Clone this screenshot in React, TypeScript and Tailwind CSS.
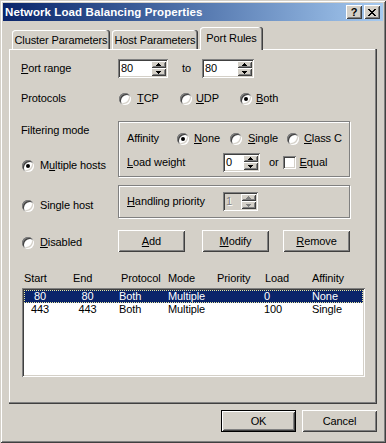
import React from "react";

const raised =
  "shadow-[inset_1px_1px_#ffffff,inset_-1px_-1px_#404040,inset_2px_2px_#d4d0c8,inset_-2px_-2px_#808080]";
const sunken =
  "shadow-[inset_1px_1px_#808080,inset_-1px_-1px_#ffffff,inset_2px_2px_#404040,inset_-2px_-2px_#d4d0c8]";
const etched = "border border-[#808080] shadow-[inset_1px_1px_#ffffff,1px_1px_#ffffff]";

function Arrow({ up, disabled }: { up: boolean; disabled?: boolean }) {
  const c = disabled ? "#808080" : "#000000";
  return (
    <svg width="5" height="3" viewBox="0 0 5 3" shapeRendering="crispEdges">
      {up ? (
        <>
          <rect x="2" y="0" width="1" height="1" fill={c} />
          <rect x="1" y="1" width="3" height="1" fill={c} />
          <rect x="0" y="2" width="5" height="1" fill={c} />
        </>
      ) : (
        <>
          <rect x="0" y="0" width="5" height="1" fill={c} />
          <rect x="1" y="1" width="3" height="1" fill={c} />
          <rect x="2" y="2" width="1" height="1" fill={c} />
        </>
      )}
    </svg>
  );
}

function Spinner({ className, value, disabled }: { className: string; value: string; disabled?: boolean }) {
  return (
    <div className={`flex h-[19px] p-[2px] ${sunken} ${disabled ? "bg-[#d4d0c8]" : "bg-white"} ${className}`}>
      <div
        className={`flex-1 pl-[1px] leading-[15px] ${
          disabled ? "text-[#808080] [text-shadow:1px_1px_0_#ffffff]" : "text-black"
        }`}
      >
        {value}
      </div>
      <div className="flex w-[15px] flex-col bg-[#d4d0c8]">
        <div className={`flex h-[7px] items-center justify-center ${raised}`}>
          <Arrow up disabled={disabled} />
        </div>
        <div className={`flex h-[8px] items-center justify-center ${raised}`}>
          <Arrow up={false} disabled={disabled} />
        </div>
      </div>
    </div>
  );
}

function Radio({ checked }: { checked?: boolean }) {
  return (
    <div
      className={`flex h-[12px] w-[12px] shrink-0 items-center justify-center rounded-full bg-white shadow-[inset_1px_1px_#808080,inset_-1px_-1px_#ffffff,inset_2px_2px_#404040,inset_-2px_-2px_#d4d0c8]`}
    >
      {checked && <div className="h-[4px] w-[4px] rounded-full bg-black" />}
    </div>
  );
}

function RadioItem({
  checked,
  children,
  className = "",
  gap = "gap-[6px]",
}: {
  checked?: boolean;
  children: React.ReactNode;
  className?: string;
  gap?: string;
}) {
  return (
    <div className={`flex h-[13px] items-center ${gap} ${className}`}>
      <Radio checked={checked} />
      <span className="leading-[13px] whitespace-nowrap">{children}</span>
    </div>
  );
}

function Button({ children, className = "", isDefault }: { children: React.ReactNode; className?: string; isDefault?: boolean }) {
  if (isDefault) {
    return (
      <div className={`h-[22px] border border-black bg-[#d4d0c8] ${className}`}>
        <div className={`flex h-full w-full items-center justify-center ${raised}`}>{children}</div>
      </div>
    );
  }
  return (
    <div className={`flex h-[22px] items-center justify-center bg-[#d4d0c8] ${raised} ${className}`}>{children}</div>
  );
}

const U = ({ children }: { children: React.ReactNode }) => <u className="underline-offset-[1px]">{children}</u>;

export default function App() {
  return (
    <div
      className={`flex h-[443px] w-[386px] flex-col bg-[#d4d0c8] p-[3px] font-['Liberation_Sans',Arial,sans-serif] text-[11px] tracking-[-0.1px] text-black shadow-[inset_1px_1px_#d4d0c8,inset_-1px_-1px_#404040,inset_2px_2px_#ffffff,inset_-2px_-2px_#808080]`}
    >
      {/* Title bar */}
      <div className="flex h-[18px] items-center justify-between bg-gradient-to-r from-[#0a246a] to-[#a6caf0] pl-[2px] pr-[3px]">
        <span className="text-[11.5px] font-bold leading-[18px] tracking-[0.1px] text-white">Network Load Balancing Properties</span>
        <div className="flex gap-[2px]">
          <div className={`flex h-[14px] w-[16px] items-center justify-center bg-[#d4d0c8] text-[11px] font-bold leading-[14px] ${raised}`}>
            ?
          </div>
          <div className={`flex h-[14px] w-[16px] items-center justify-center bg-[#d4d0c8] ${raised}`}>
            <svg width="8" height="7" viewBox="0 0 8 7" shapeRendering="crispEdges">
              <path d="M0 0h2v1H0zM6 0h2v1H6zM1 1h2v1H1zM5 1h2v1H5zM2 2h4v1H2zM3 3h2v1H3zM2 4h4v1H2zM1 5h2v1H1zM5 5h2v1H5zM0 6h2v1H0zM6 6h2v1H6z" fill="#000" />
            </svg>
          </div>
        </div>
      </div>

      <div className="flex flex-col px-[6px]">
        {/* Tabs */}
        <div className="relative z-10 mt-[6px] flex h-[22px] items-end pl-[3px]">
          <div className="h-[19px] w-[98px] rounded-t-[3px] pt-[4px] text-center leading-[13px] shadow-[inset_-1px_0_#404040,inset_-2px_0_#808080,inset_1px_1px_#ffffff]">
            Cluster Parameters
          </div>
          <div className="ml-[2px] h-[19px] w-[86px] rounded-t-[3px] pt-[4px] text-center leading-[13px] shadow-[inset_-1px_0_#404040,inset_-2px_0_#808080,inset_1px_1px_#ffffff]">
            Host Parameters
          </div>
          <div className="mb-[-1px] ml-[2px] h-[23px] w-[63px] rounded-t-[3px] bg-[#d4d0c8] pt-[5px] text-center leading-[13px] shadow-[inset_-1px_0_#404040,inset_-2px_0_#808080,inset_1px_1px_#ffffff]">
            Port Rules
          </div>
        </div>

        {/* Panel */}
        <div className="flex h-[355px] flex-col pl-[12px] pt-[10px] shadow-[inset_-1px_-1px_#404040,inset_-2px_-2px_#808080,inset_1px_1px_#ffffff]">
          {/* Port range */}
          <div className="flex h-[19px] items-center">
            <span className="w-[97px] leading-[13px]">
              <U>P</U>ort range
            </span>
            <Spinner className="w-[50px]" value="80" />
            <span className="ml-[14px] w-[20px] leading-[13px]">to</span>
            <Spinner className="w-[52px]" value="80" />
          </div>

          {/* Protocols */}
          <div className="mt-[11px] flex h-[19px] items-center">
            <span className="w-[97px] leading-[13px]">Protocols</span>
            <RadioItem className="ml-[1px] w-[61px]">
              <U>T</U>CP
            </RadioItem>
            <RadioItem className="w-[60px]" gap="gap-[4px]">
              <U>U</U>DP
            </RadioItem>
            <RadioItem checked gap="gap-[4px]">
              <U>B</U>oth
            </RadioItem>
          </div>

          {/* Affinity row */}
          <div className="mt-[13px] flex">
            <div className="flex w-[97px] flex-col">
              <span className="mt-[3px] leading-[13px]">Filtering mode</span>
              <RadioItem checked className="mt-[22px] pl-[1px]">
                M<U>u</U>ltiple hosts
              </RadioItem>
            </div>
            <div className={`flex h-[56px] w-[232px] flex-col pl-[8px] ${etched}`}>
              <div className="mt-[10px] flex h-[13px] items-center">
                <span className="w-[50px] leading-[13px]">Affinity</span>
                <RadioItem checked className="w-[53px]" gap="gap-[5px]">
                  <U>N</U>one
                </RadioItem>
                <RadioItem className="w-[57px]" gap="gap-[6px]">
                  <U>S</U>ingle
                </RadioItem>
                <RadioItem gap="gap-[5px]">
                  <U>C</U>lass C
                </RadioItem>
              </div>
              <div className="mt-[8px] flex h-[19px] items-center">
                <span className="w-[96px] leading-[13px]">
                  <U>L</U>oad weight
                </span>
                <Spinner className="w-[37px]" value="0" />
                <span className="ml-[9px] leading-[13px]">or</span>
                <div className={`ml-[4px] h-[13px] w-[13px] bg-white ${sunken}`} />
                <span className="ml-[4px] leading-[13px]">
                  <U>E</U>qual
                </span>
              </div>
            </div>
          </div>

          {/* Handling priority row */}
          <div className="mt-[8px] flex items-start">
            <div className="w-[97px]">
              <RadioItem className="mt-[14px] pl-[1px]">Single host</RadioItem>
            </div>
            <div className={`flex h-[33px] w-[232px] items-center pl-[8px] ${etched}`}>
              <span className="w-[96px] leading-[13px]">
                <U>H</U>andling priority
              </span>
              <Spinner className="w-[35px]" value="1" disabled />
            </div>
          </div>

          {/* Buttons row */}
          <div className="mt-[12px] flex h-[22px] items-center">
            <div className="w-[97px] pt-[3px]">
              <RadioItem className="pl-[1px]">
                <U>D</U>isabled
              </RadioItem>
            </div>
            <Button className="w-[67px]">
              <span>
                <U>A</U>dd
              </span>
            </Button>
            <Button className="ml-[17px] w-[67px]">
              <span>
                <U>M</U>odify
              </span>
            </Button>
            <Button className="ml-[14px] w-[67px]">
              <span>
                <U>R</U>emove
              </span>
            </Button>
          </div>

          {/* List header */}
          <div className="mt-[20px] grid grid-cols-[49px_48px_47px_49px_48px_47px_1fr] pl-[3px] leading-[13px]">
            <span>Start</span>
            <span>End</span>
            <span>Protocol</span>
            <span>Mode</span>
            <span>Priority</span>
            <span>Load</span>
            <span>Affinity</span>
          </div>

          {/* List */}
          <div className={`ml-[1px] mt-[3px] flex h-[89px] w-[343px] flex-col bg-white p-[2px] ${sunken}`}>
            <div className="grid h-[13px] grid-cols-[32px_63px_49px_48px_48px_48px_1fr] bg-[#0a246a] leading-[13px] text-white outline outline-1 -outline-offset-1 outline-dotted outline-[#e8e8a0]">
              <span className="text-center">80</span>
              <span className="text-center">80</span>
              <span>Both</span>
              <span>Multiple</span>
              <span></span>
              <span>0</span>
              <span>None</span>
            </div>
            <div className="grid h-[13px] grid-cols-[32px_63px_49px_48px_48px_48px_1fr] leading-[13px]">
              <span className="text-center">443</span>
              <span className="text-center">443</span>
              <span>Both</span>
              <span>Multiple</span>
              <span></span>
              <span>100</span>
              <span>Single</span>
            </div>
          </div>
        </div>

        {/* Footer */}
        <div className="mt-[6px] flex justify-end gap-[6px]">
          <Button isDefault className="w-[75px]">
            OK
          </Button>
          <Button className="w-[75px]">Cancel</Button>
        </div>
      </div>
    </div>
  );
}
